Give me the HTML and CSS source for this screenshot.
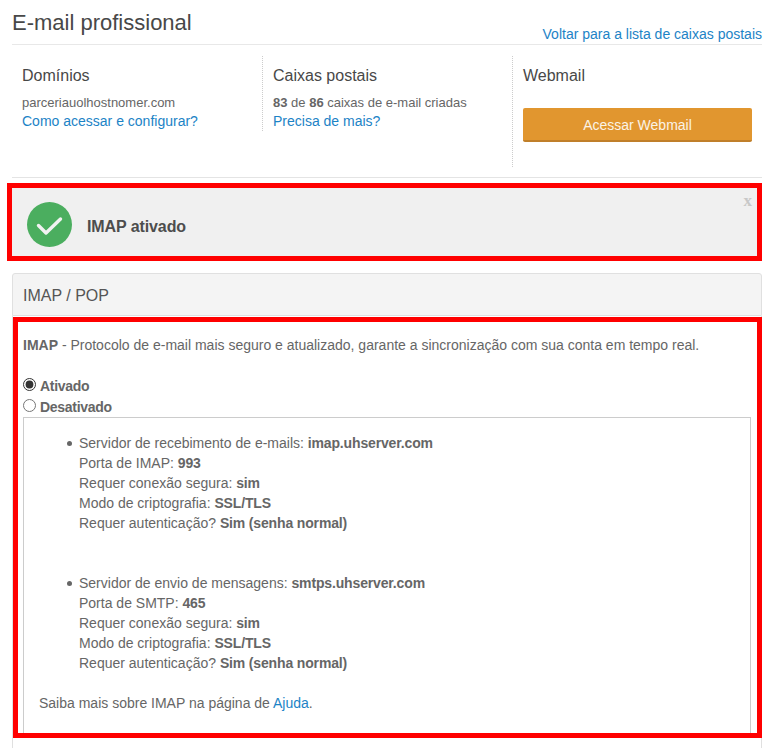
FILE: index.html
```html
<!DOCTYPE html>
<html lang="pt-BR">
<head>
<meta charset="utf-8">
<title>E-mail profissional</title>
<link rel="stylesheet" href="styles.css">
</head>
<body>
<div class="page">
  <header class="top">
    <h1>E-mail profissional</h1>
    <a class="link back" href="#">Voltar para a lista de caixas postais</a>
  </header>
  <section class="summary">
    <div class="col col-first">
      <h2>Domínios</h2>
      <p>parceriauolhostnomer.com</p>
      <a class="link" href="#">Como acessar e configurar?</a>
    </div>
    <div class="col col-mid">
      <h2>Caixas postais</h2>
      <p><b>83</b> de <b>86</b> caixas de e-mail criadas</p>
      <a class="link" href="#">Precisa de mais?</a>
    </div>
    <div class="col col-last">
      <h2>Webmail</h2>
      <a class="btn" href="#">Acessar Webmail</a>
    </div>
  </section>
  <div class="alert">
    <svg class="ok" width="45" height="45" viewBox="0 0 45 45"><circle cx="22.5" cy="22.5" r="22.5" fill="#4bae5f"/><path d="M11.5 23.5l7.5 7.5 14.5-14" fill="none" stroke="#f2f2f2" stroke-width="3.4" stroke-linecap="round" stroke-linejoin="round"/></svg>
    <strong>IMAP ativado</strong>
    <span class="close">x</span>
  </div>
  <section class="panel">
    <div class="panel-head">IMAP / POP</div>
    <div class="panel-body">
      <div class="frame">
        <p class="intro"><b>IMAP</b> - Protocolo de e-mail mais seguro e atualizado, garante a sincronização com sua conta em tempo real.</p>
        <label class="radio"><input type="radio" name="imap" checked><b>Ativado</b></label>
        <label class="radio"><input type="radio" name="imap"><b>Desativado</b></label>
        <div class="info">
          <ul>
            <li>Servidor de recebimento de e-mails: <b>imap.uhserver.com</b><br>Porta de IMAP: <b>993</b><br>Requer conexão segura: <b>sim</b><br>Modo de criptografia: <b>SSL/TLS</b><br>Requer autenticação? <b>Sim (senha normal)</b></li>
            <li>Servidor de envio de mensagens: <b>smtps.uhserver.com</b><br>Porta de SMTP: <b>465</b><br>Requer conexão segura: <b>sim</b><br>Modo de criptografia: <b>SSL/TLS</b><br>Requer autenticação? <b>Sim (senha normal)</b></li>
          </ul>
          <p class="more">Saiba mais sobre IMAP na página de <a class="link" href="#">Ajuda</a>.</p>
        </div>
      </div>
    </div>
  </section>
</div>
</body>
</html>
```
FILE: styles.css
```css
* { box-sizing: border-box; }
html, body { margin: 0; padding: 0; background: #fff; height: 748px; overflow: hidden; }
body { font-family: "Liberation Sans", Arial, sans-serif; font-size: 14px; line-height: 20px; color: #666; }
b, strong { font-weight: 700; }
p { margin: 0; }
.page { width: 750px; margin-left: 12px; }
.link { color: #1c83c6; text-decoration: none; }
.top { height: 45px; border-bottom: 1px solid #e8e8e8; display: flex; justify-content: space-between; }
h1 { margin: 0; padding-top: 9px; font-size: 22px; line-height: 28px; font-weight: 400; color: #484848; }
.back { margin-top: 24px; }
.summary { display: flex; height: 133px; padding-top: 11px; border-bottom: 1px solid #e4e4e4; }
.col { width: 250px; padding: 10px 10px 0; }
.col-first { width: 251px; height: 75px; border-right: 1px dotted #ccc; }
.col-mid { height: 111px; border-right: 1px dotted #ccc; }
.col-last { flex: 1; }
h2 { margin: 0 0 8px; font-size: 16px; line-height: 20px; font-weight: 400; color: #484848; }
.btn { display: block; width: 229px; height: 34px; margin-top: 22px; background: #e1962f; border-bottom: 2px solid #c07f2a; border-radius: 2px; color: #fbf3e6; text-align: center; line-height: 34px; text-decoration: none; }
.col p { font-size: 13px; line-height: 18px; }
.col .link { display: block; line-height: 19px; }
.col .btn { color: #fbf3e6; }
.alert { position: relative; width: 755px; height: 78px; margin: 5px 0 12px -5px; border: 5px solid #f00; background: #f0f0f0; display: flex; align-items: center; padding: 4px 0 0 15px; }
.ok { margin-right: 15px; }
.alert strong { font-size: 16px; color: #4d4d4d; letter-spacing: -0.1px; padding-top: 5px; }
.close { position: absolute; right: 5px; top: 3px; font-family: "Liberation Serif", serif; font-weight: 700; font-size: 17px; color: #c8c8c8; }
.panel-head { height: 43px; padding-left: 10px; font-size: 16px; line-height: 44px; background: #f4f4f4; border: 1px solid #e0e0e0; border-radius: 3px 3px 0 0; color: #555; }
.panel-body { height: 432px; padding-top: 1px; border: solid #e0e0e0; border-width: 0 1px; }
.frame { width: 749px; height: 421px; border: 5px solid #f00; padding: 13px 5px 0 5px; overflow: hidden; }
.intro { margin-bottom: 20px; }
.radio { display: flex; align-items: center; height: 21px; }
.radio b { letter-spacing: -0.3px; }
.radio input { margin: -3px 4px 0 0; width: 13px; height: 13px; accent-color: #333; }
.info { width: 728px; height: 400px; border: 1px solid #ccc; padding: 15px; }
.info b { letter-spacing: -0.15px; }
ul { margin: 0; padding-left: 40px; list-style: none; }
li { margin-bottom: 40px; }
li::before { content: ""; display: inline-block; width: 5px; height: 5px; margin: 0 7px 2px -12px; border-radius: 50%; background: #666; }
.more { margin-top: -20px; }
```
